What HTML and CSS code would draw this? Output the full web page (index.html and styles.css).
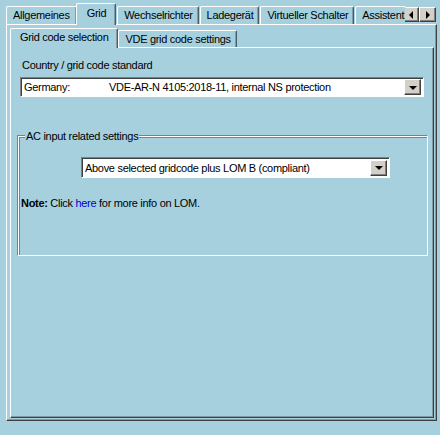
FILE: index.html
```html
<!DOCTYPE html>
<html lang="en">
<head>
    <meta charset="UTF-8">
    <title>Grid settings</title>
    <link rel="stylesheet" href="styles.css">
</head>
<body>
    <div class="window">
        <div class="tab-row">
            <div class="tabs">
                <div class="tab first">Allgemeines</div>
                <div class="tab active">Grid</div>
                <div class="tab">Wechselrichter</div>
                <div class="tab">Ladegerät</div>
                <div class="tab">Virtueller Schalter</div>
                <div class="tab">Assistent</div>
            </div>
            <div class="scroll-btns">
                <div class="btn"><span class="arrow-left"></span></div>
                <div class="btn"><span class="arrow-right"></span></div>
            </div>
        </div>

        <div class="panel outer">
            <div class="tabs sub">
                <div class="tab active">Grid code selection</div>
                <div class="tab">VDE grid code settings</div>
            </div>

            <div class="panel inner">
                <div class="label">Country / grid code standard</div>
                <div class="combo wide">
                    <div class="combo-text">
                        <span class="country">Germany:</span>
                        <span>VDE-AR-N 4105:2018-11, internal NS protection</span>
                    </div>
                    <div class="btn drop"><span class="arrow-down"></span></div>
                </div>

                <div class="group">
                    <div class="group-title">AC input related settings</div>
                    <div class="combo lom">
                        <div class="combo-text">Above selected gridcode plus LOM B (compliant)</div>
                        <div class="btn drop"><span class="arrow-down"></span></div>
                    </div>
                    <p class="note"><b>Note:</b> Click <a href="#">here</a> for more info on LOM.</p>
                </div>
            </div>
        </div>
    </div>
</body>
</html>
```

FILE: styles.css
```css
* {
    margin: 0;
    padding: 0;
    box-sizing: border-box;
}

body {
    font-family: "Liberation Sans", Arial, sans-serif;
    font-size: 11px;
    letter-spacing: -0.3px;
    color: #000;
    background: #a7d0df;
    width: 440px;
    height: 435px;
    overflow: hidden;
}

.window {
    padding: 2px 4px 0 6px;
}

/* tab strips */
.tab-row {
    display: flex;
    align-items: flex-start;
    height: 22px;
}

.tab-row .tabs {
    flex: 1;
    overflow: hidden;
    height: 23px;
    position: relative;
    z-index: 1;
}

.tabs {
    display: flex;
    align-items: flex-end;
}

.tab {
    height: 18px;
    padding: 2px 5px 0 6px;
    border-top: 1px solid #fff;
    border-left: 1px solid #fff;
    border-right: 1px solid #46606b;
    box-shadow: inset -1px 0 0 #7f9aa5;
    border-radius: 2px 2px 0 0;
    white-space: nowrap;
    background: #a7d0df;
    margin-bottom: 1px;
}

.tab-row .tab + .tab {
    margin-left: 1px;
}

.tab-row .tab.first {
    padding-right: 6px;
}

.tab.active {
    height: 22px;
    margin: 0 -2px 0 -2px;
    padding: 3px 8px 0 9px;
    position: relative;
    z-index: 2;
    margin-bottom: 0;
}

.tab-row .tab.active {
    margin-left: -1px;
    margin-right: 0;
    padding: 3px 9px 0 10px;
}

.scroll-btns {
    display: flex;
    margin-top: 5px;
    margin-left: -3px;
}

.btn {
    width: 17px;
    height: 15px;
    background: #d4d0c8;
    border-top: 1px solid #fff;
    border-left: 1px solid #fff;
    border-right: 1px solid #404040;
    border-bottom: 1px solid #404040;
    box-shadow: inset -1px -1px 0 #808080;
    display: flex;
    align-items: center;
    justify-content: center;
}

.arrow-left {
    border-right: 4px solid #000;
    border-top: 4px solid transparent;
    border-bottom: 4px solid transparent;
}

.arrow-right {
    border-left: 4px solid #000;
    border-top: 4px solid transparent;
    border-bottom: 4px solid transparent;
}

.arrow-down {
    border-top: 4px solid #000;
    border-left: 4px solid transparent;
    border-right: 4px solid transparent;
    margin-top: 1px;
}

/* panels */
.panel {
    border-top: 1px solid #fff;
    border-left: 1px solid #fff;
    border-right: 1px solid #404040;
    border-bottom: 1px solid #404040;
    box-shadow: inset -1px -1px 0 #7f9aa5;
}

.panel.outer {
    width: 431px;
    height: 397px;
    padding: 3px 2px 2px 3px;
    display: flex;
    flex-direction: column;
}

.tabs.sub {
    height: 20px;
    position: relative;
    z-index: 1;
    margin-bottom: -1px;
}

.tabs.sub .tab {
    height: 17px;
    margin-bottom: 1px;
}

.tabs.sub .tab.active {
    height: 20px;
    margin: 0;
    padding: 2px 9px 0 9px;
}

.panel.inner {
    flex: 1;
    padding: 11px 0 0 6px;
    display: flex;
    flex-direction: column;
}

.label {
    margin-left: 5px;
    height: 13px;
    line-height: 13px;
}

/* combo boxes */
.combo {
    display: flex;
    align-items: center;
    background: #fff;
    border-top: 1px solid #808080;
    border-left: 1px solid #808080;
    border-right: 1px solid #fff;
    border-bottom: 1px solid #fff;
    box-shadow: inset 1px 1px 0 #404040;
    padding: 2px 2px 2px 3px;
}

.combo.wide {
    width: 404px;
    height: 20px;
    margin: 5px 0 0 3px;
}

.combo-text {
    flex: 1;
    white-space: nowrap;
    display: flex;
}

.country {
    width: 85px;
}

.btn.drop {
    width: 17px;
    height: 16px;
}

/* group box */
.group {
    position: relative;
    width: 410px;
    height: 120px;
    margin-top: 39px;
    margin-left: 1px;
    border: 1px solid #fff;
    box-shadow: inset 1px 1px 0 #808080, -1px -1px 0 #808080;
    padding: 20px 0 0 2px;
}

.group-title {
    position: absolute;
    top: -7px;
    left: 6px;
    padding: 0 1px;
    background: #a7d0df;
    line-height: 13px;
}

.combo.lom {
    width: 309px;
    height: 21px;
    margin-left: 60px;
}

.note {
    margin-top: 19px;
    line-height: 13px;
}

.note a {
    color: #0000cc;
    text-decoration: none;
}
```
